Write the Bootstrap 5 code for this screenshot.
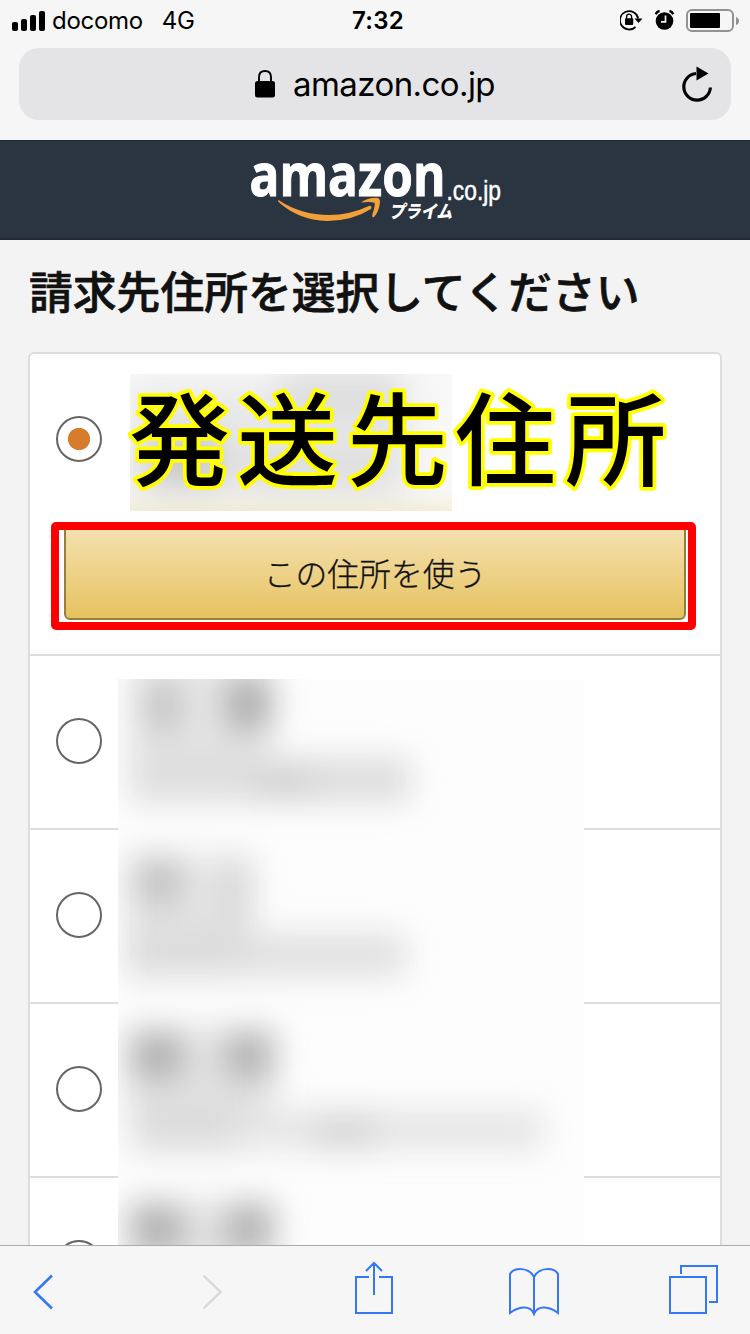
<!DOCTYPE html>
<html lang="ja">
<head>
<meta charset="utf-8">
<meta name="viewport" content="width=device-width, initial-scale=1">
<title>請求先住所を選択してください</title>
<link href="https://cdn.jsdelivr.net/npm/bootstrap@5.3.0/dist/css/bootstrap.min.css" rel="stylesheet">
<style>
  html, body { height: 1334px; overflow: hidden; }
  body { background: #f3f3f3; color: #111; font-family: Inter, "Noto Sans CJK JP", sans-serif; }
  svg { display: block; flex: none; }
  .browser-top { height: 140px; background: #f6f6f6; color: #000; }
  .status-bar { height: 40px; padding: 1px 11px 0 12px; font-size: 24px; line-height: 40px; }
  .status-bar > div { flex: 1 1 0; }
  .carrier { letter-spacing: -.3px; margin-left: 6px; }
  .network { margin-left: 19px; letter-spacing: -.4px; }
  .clock { font-weight: 600; letter-spacing: .3px; padding-left: 5px; }
  .address-bar { height: 72px; margin: 8px 19px 0; border-radius: 20px; background: #e4e4e6; }
  .address-bar .host { font-size: 33px; letter-spacing: -.58px; line-height: 72px; margin-left: 18px; }
  .shop-bar { height: 100px; background: #2b3541; border-top: 1px solid #232b36; border-bottom: 2px solid #232b36; }
  .page-title { height: 112px; padding: 0 29px; font-size: 43.8px; font-weight: 500; -webkit-text-stroke: .7px #111; line-height: 107px; white-space: nowrap; }
  .address-list { margin: 0 28px; width: 694px; border: 2px solid #ddd; border-radius: 6px 6px 0 0; background: #fff; }
  .address-item { height: 174px; padding: 0 26px 2px; border-bottom: 2px solid #ddd; }
  .address-item.chosen { height: 302px; padding: 62px 34px 0 26px; }
  .address-item .form-check-input { width: 46px; height: 46px; margin: 0; border: 2px solid #666; background: #fff; }
  .address-item .form-check-input:checked { background: radial-gradient(circle, #d67c2c 10.7px, #fff 11.5px); }
  .use-btn { height: 96px; margin: 62px 0 0 8px; width: 622px; border: 2px solid #93803f; border-radius: 6px; padding: 5px 0 0;
    background: linear-gradient(#f5e2b3, #e6c25f); color: #111; font-size: 31.8px; font-weight: 300; line-height: 87px; -webkit-text-stroke: .3px #111; }
  .frame-mark { left: 51px; top: 522px; width: 645px; height: 108px; border: 8px solid #f00; border-radius: 5px; }
  .tool-bar { height: 89px; background: #f6f6f6; border-top: 1px solid #aaa; padding: 15px 31px 0 32px; }
  .tool-forward { margin-left: 145px; }
  .tool-share { margin-left: 129px; }
  .tool-book { margin-left: 114px; }
  .tool-tabs { margin-left: 109px; }
</style>
</head>
<body class="position-relative d-flex flex-column">
  <header class="browser-top flex-shrink-0">
    <div class="status-bar d-flex align-items-center">
      <div class="d-flex align-items-center">
        <svg width="34" height="20" viewBox="0 0 34 20"><rect y="11" width="6" height="9" rx="2"/><rect x="9" y="8" width="6" height="12" rx="2"/><rect x="18" y="4" width="6" height="16" rx="2"/><rect x="27" width="6" height="20" rx="2"/></svg>
        <span class="carrier">docomo</span><span class="network">4G</span>
      </div>
      <span class="clock">7:32</span>
      <div class="d-flex align-items-center justify-content-end">
        <svg width="24" height="22" viewBox="1 1 24 22"><path d="M16.500 18A9.200 9.200 0 1 1 19.200 9.500" fill="none" stroke="#000" stroke-width="1.8"/><path d="M15.500 9.400h8L19.500 14z"/><rect x="6" y="9.300" width="8.200" height="6.600" rx="1"/><path d="M7.600 10V7.700a2.500 2.500 0 0 1 5 0V10" fill="none" stroke="#000" stroke-width="1.300"/></svg>
        <svg class="mx-2" width="26" height="22" viewBox="1 1 26 22"><circle cx="13.500" cy="12" r="8.800"/><path d="M4.700 5.300Q6 2.300 8.600 2M22.300 5.300Q21 2.300 18.400 2" fill="none" stroke="#000" stroke-width="2.400"/><path d="M14.500 6.500v6.300H10" fill="none" stroke="#f6f6f6" stroke-width="1.700"/></svg>
        <svg width="53" height="24" viewBox="0 0 53 24"><rect x="1" y="1" width="46" height="21" rx="5" fill="none" stroke="#929292" stroke-width="2"/><rect x="4" y="4" width="30" height="15" rx="1"/><path d="M50 8q3 1 3 4t-3 4z" fill="#929292"/></svg>
      </div>
    </div>
    <div class="address-bar d-flex align-items-center justify-content-center position-relative">
      <svg width="20" height="28" viewBox="0 0 20 28"><rect y="11" width="20" height="16.500" rx="2.500"/><path d="M4 12V7.200Q4 1 10 1t6 6.200V12" fill="none" stroke="#000" stroke-width="1.900"/></svg>
      <span class="host">amazon.co.jp</span>
      <svg class="position-absolute end-0 me-3" width="36" height="40" viewBox="-.5 0 36 40"><path d="M16.500 9.500A13.300 13.300 0 1 0 30.900 23.500" fill="none" stroke="#000" stroke-width="3.200"/><path d="M17 2.500v14l12-7z"/></svg>
    </div>
  </header>

  <nav class="shop-bar flex-shrink-0 d-flex justify-content-center">
    <svg class="overflow-visible" width="260" height="96" viewBox="245 141 260 96">
      <text x="249.500" y="195.500" font-family="'Open Sans', sans-serif" font-weight="700" font-size="59" fill="#fff" stroke="#fff" stroke-width="1" textLength="196" lengthAdjust="spacingAndGlyphs">amazon</text>
      <text x="446.500" y="199.500" font-family="'Liberation Sans', sans-serif" font-size="28" fill="#fff" stroke="#fff" stroke-width=".5" textLength="54.500" lengthAdjust="spacingAndGlyphs">.co.jp</text>
      <text transform="translate(389 217.500) skewX(-12)" font-family="'Noto Sans CJK JP', sans-serif" font-weight="900" font-size="18" fill="#fff" textLength="63" lengthAdjust="spacingAndGlyphs">プライム</text>
      <path d="M278.500 200Q301 215 329 215Q350 215 369.500 205.800Q372.500 206 371 209Q352 221 327 221Q298 220 278 201.500Z" fill="#f3a03a"/>
      <path d="M361 202.500Q367 197.500 377 197.700Q380 198 380 202Q379 212 374 217Q371.500 218 372.500 214Q375.500 205 374.500 202.800Q370 201.300 361 202.500Z" fill="#f3a03a"/>
    </svg>
  </nav>

  <main class="flex-grow-1 overflow-hidden">
    <h1 class="page-title m-0">請求先住所を選択してください</h1>
    <div class="address-list">
      <div class="address-item chosen">
        <input class="form-check-input d-block" type="radio" name="address" checked>
        <button class="use-btn btn d-block" type="button">この住所を使う</button>
      </div>
      <div class="address-item d-flex align-items-center"><input class="form-check-input" type="radio" name="address"></div>
      <div class="address-item d-flex align-items-center"><input class="form-check-input" type="radio" name="address"></div>
      <div class="address-item d-flex align-items-center"><input class="form-check-input" type="radio" name="address"></div>
      <div class="address-item d-flex align-items-center"><input class="form-check-input" type="radio" name="address"></div>
    </div>
  </main>

  <!-- Blurred private details and the annotations laid over the list -->
  <svg class="position-absolute top-0 start-0 pe-none" width="750" height="1245" viewBox="0 0 750 1245">
    <defs>
      <filter id="soft" color-interpolation-filters="sRGB" filterUnits="userSpaceOnUse" x="60" y="300" width="600" height="1050"><feGaussianBlur stdDeviation="16"/></filter>
      <clipPath id="c1"><rect x="130" y="374" width="322" height="137"/></clipPath>
      <clipPath id="c2"><rect x="118" y="679" width="466" height="566"/></clipPath>
    </defs>
    <g clip-path="url(#c1)">
      <rect x="130" y="374" width="322" height="137" fill="#f8f8f8"/>
      <g filter="url(#soft)">
        <rect x="130" y="385" width="280" height="110" fill="#e8e8e8"/>
        <rect x="280" y="370" width="120" height="50" fill="#dedede"/>
        <rect x="150" y="435" width="70" height="50" fill="#c8c8c8"/>
        <rect x="240" y="450" width="150" height="40" fill="#dedede"/>
        <rect x="100" y="515" width="370" height="30" fill="#ecdfae"/>
      </g>
    </g>
    <g clip-path="url(#c2)">
      <rect x="118" y="679" width="466" height="566" fill="#fdfdfd"/>
      <g filter="url(#soft)">
        <rect x="130" y="660" width="140" height="100" fill="#e6e6e6"/><rect x="144" y="682" width="38" height="48" fill="#c4c4c4"/><rect x="226" y="678" width="46" height="52" fill="#aeaeae"/>
        <rect x="130" y="745" width="120" height="58" fill="#dedede"/><rect x="240" y="758" width="170" height="44" fill="#dcdcdc"/><rect x="260" y="770" width="50" height="28" fill="#d0d0d0"/>
        <rect x="126" y="855" width="128" height="80" fill="#e6e6e6"/><rect x="136" y="858" width="46" height="46" fill="#c2c2c2"/><rect x="220" y="860" width="30" height="60" fill="#d6d6d6"/>
        <rect x="126" y="922" width="120" height="56" fill="#dcdcdc"/><rect x="240" y="934" width="165" height="42" fill="#dfdfdf"/>
        <rect x="126" y="1028" width="148" height="82" fill="#e2e2e2"/><rect x="132" y="1032" width="50" height="46" fill="#b0b0b0"/><rect x="226" y="1032" width="48" height="46" fill="#b2b2b2"/>
        <rect x="132" y="1098" width="110" height="54" fill="#dcdcdc"/><rect x="235" y="1110" width="308" height="40" fill="#e5e5e5"/><rect x="315" y="1115" width="60" height="34" fill="#d5d5d5"/>
        <rect x="126" y="1202" width="148" height="80" fill="#e2e2e2"/><rect x="132" y="1204" width="50" height="46" fill="#b0b0b0"/><rect x="226" y="1204" width="48" height="46" fill="#b2b2b2"/>
      </g>
    </g>
    <text x="129 237 347 455 565" y="478" font-family="'Noto Sans CJK JP', sans-serif" font-weight="500" font-size="101" stroke="#ff0" stroke-width="7.500" stroke-linejoin="round" paint-order="stroke">発送先住所</text>
  </svg>
  <div class="frame-mark position-absolute"></div>

  <footer class="tool-bar flex-shrink-0 d-flex align-items-start position-relative">
    <svg width="24" height="60" viewBox="32 1261 24 60"><path d="M52 1275.500L35 1292l17 16.500" fill="none" stroke="#3478f6" stroke-width="2.600"/></svg>
    <svg class="tool-forward" width="24" height="60" viewBox="201 1261 24 60"><path d="M203.500 1275.500l17 16.500-17 16.500" fill="none" stroke="#d8d8d8" stroke-width="2.400"/></svg>
    <svg class="tool-share" width="40" height="60" viewBox="354 1261 40 60"><path d="M369 1277h-13v36h36v-36h-13M374 1295v-32M366 1271l8-8 8 8" fill="none" stroke="#3478f6" stroke-width="2"/></svg>
    <svg class="tool-book" width="52" height="60" viewBox="508 1261 52 60"><path d="M534 1315v-38c-5-10-20-10-24-3v39c8-6 20-9 24 1c4-10 16-7 24-1v-39c-4-7-19-7-24 3" fill="none" stroke="#3478f6" stroke-width="2"/></svg>
    <svg class="tool-tabs" width="50" height="60" viewBox="669 1261 50 60"><path d="M670 1277h36v36h-36zM681 1274v-8h36v36h-8" fill="none" stroke="#3478f6" stroke-width="2"/></svg>
  </footer>
<script src="https://cdn.jsdelivr.net/npm/bootstrap@5.3.0/dist/js/bootstrap.bundle.min.js"></script>
</body>
</html>
